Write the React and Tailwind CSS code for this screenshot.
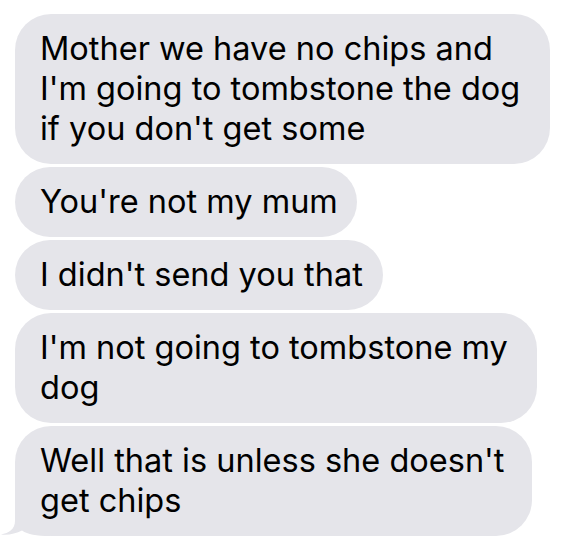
import React from "react";

const messages = [
  { lines: ["Mother we have no chips and", "I'm going to tombstone the dog", "if you don't get some"], w: "w-[535px]" },
  { lines: ["You're not my mum"], w: "w-[342px]" },
  { lines: ["I didn't send you that"], w: "w-[368px]" },
  { lines: ["I'm not going to tombstone my", "dog"], w: "w-[522px]" },
  { lines: ["Well that is unless she doesn't", "get chips"], w: "w-[517px]", tail: true },
];

function Tail() {
  return (
    <svg
      className="absolute left-[-15px] bottom-0"
      width="50"
      height="37"
      viewBox="0 0 50 37"
    >
      <path
        d="M15 0 L15 22 C15 30 9 34 1 35.5 C8 36.5 16 34.5 22 31.5 C28 35.5 36 37 50 37 L50 0 Z"
        fill="#e5e5ea"
      />
    </svg>
  );
}

export default function App() {
  return (
    <div
      className="w-[584px] h-[541px] bg-white overflow-hidden pl-[15px] pt-[14px] flex flex-col gap-[3px]"
      style={{ fontFamily: "Inter, 'Liberation Sans', sans-serif" }}
    >
      {messages.map((m, i) => (
        <div
          key={i}
          className={`relative ${m.w} bg-[#e5e5ea] rounded-[36px] px-[25px] py-[15px] text-[32.5px] leading-[40px] text-black`}
        >
          {m.tail && <Tail />}
          <div className="relative">
            {m.lines.map((l, j) => (
              <div key={j} className="whitespace-nowrap">
                {l}
              </div>
            ))}
          </div>
        </div>
      ))}
    </div>
  );
}
